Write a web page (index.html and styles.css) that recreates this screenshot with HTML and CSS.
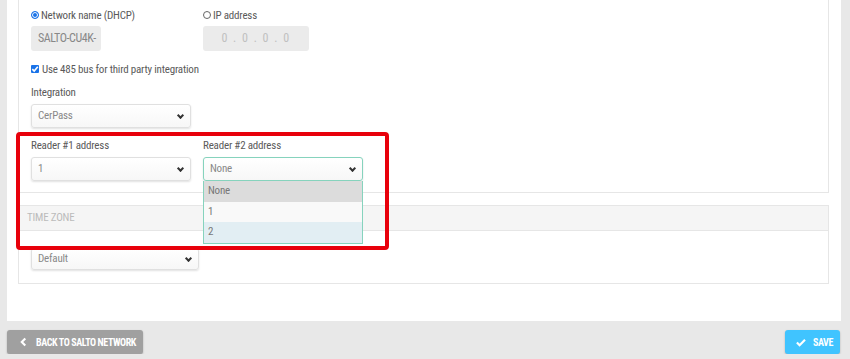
FILE: index.html
```html
<!DOCTYPE html>
<html lang="en">
<head>
    <meta charset="UTF-8">
    <title>SALTO CU4K</title>
    <link rel="stylesheet" href="styles.css">
</head>
<body>
    <div class="panel">
        <div class="card card-first">
            <div class="row">
                <div class="col">
                    <label class="opt"><span class="radio checked"></span>Network name (DHCP)</label>
                    <div class="readonly name-box">SALTO-CU4K-</div>
                </div>
                <div class="col">
                    <label class="opt"><span class="radio"></span>IP address</label>
                    <div class="readonly ip-box">0 . 0 . 0 . 0</div>
                </div>
            </div>

            <label class="opt check-row">
                <span class="checkbox">
                    <svg width="8" height="8" viewBox="0 0 8 8"><path d="M1.3 4.2 L3.2 6 L6.8 1.8" fill="none" stroke="#fff" stroke-width="1.6"/></svg>
                </span>Use 485 bus for third party integration
            </label>

            <div class="field-label">Integration</div>
            <div class="select">CerPass<span class="chev"></span></div>

            <div class="row reader-row">
                <div class="col">
                    <div class="field-label">Reader #1 address</div>
                    <div class="select">1<span class="chev"></span></div>
                </div>
                <div class="col dropdown-wrap">
                    <div class="field-label">Reader #2 address</div>
                    <div class="select focused">None<span class="chev"></span></div>
                    <ul class="dropdown">
                        <li class="selected">None</li>
                        <li>1</li>
                        <li class="hover">2</li>
                    </ul>
                </div>
            </div>
            <div class="highlight"></div>
        </div>

        <div class="card">
            <div class="card-header">TIME ZONE</div>
            <div class="card-body">
                <div class="select small">Default<span class="chev"></span></div>
            </div>
        </div>
    </div>

    <div class="footer">
        <button class="btn btn-back">
            <svg width="8" height="10" viewBox="0 0 8 10"><path d="M6 1 L2 5 L6 9" fill="none" stroke="#fff" stroke-width="2.4"/></svg>
            BACK TO SALTO NETWORK
        </button>
        <button class="btn btn-save">
            <svg width="11" height="9" viewBox="0 0 11 9"><path d="M1 4.5 L4 7.5 L10 1.5" fill="none" stroke="#fff" stroke-width="2.4"/></svg>
            SAVE
        </button>
    </div>
</body>
</html>
```

FILE: styles.css
```css
body {
    margin: 0;
    background-color: #e8e8e8;
    font-family: 'Liberation Sans Narrow', 'Roboto Condensed', 'DejaVu Sans Condensed', 'Liberation Sans', sans-serif;
    font-size: 11px;
    letter-spacing: -0.2px;
    color: #5a5a5a;
}

.panel {
    background-color: white;
    margin: 0 9px 0 7px;
    padding: 0 12px 37px 11px;
}

.card {
    border: 1px solid #e6e6e6;
    background-color: white;
    margin-top: 12px;
}

.card-first {
    position: relative;
    margin-top: 0;
    border-top: none;
    padding: 8px 12px 11px 12px;
}

.row {
    display: flex;
    gap: 12px;
}

.col {
    width: 160px;
    display: flex;
    flex-direction: column;
}

.opt {
    display: flex;
    align-items: center;
    height: 14px;
    white-space: nowrap;
}

.radio {
    width: 8px;
    height: 8px;
    border: 1px solid #666;
    border-radius: 50%;
    margin-right: 2px;
    background-color: white;
    box-sizing: border-box;
}

.radio.checked {
    border-color: #1a73e8;
    background-color: #1a73e8;
    box-shadow: inset 0 0 0 1px white;
}

.readonly {
    margin-top: 4px;
    height: 25px;
    line-height: 25px;
    border-radius: 3px;
    background-color: #ebebeb;
    color: #888;
}

.name-box {
    width: 63px;
    padding-left: 7px;
    font-size: 12px;
    letter-spacing: -0.4px;
}

.ip-box {
    width: 106px;
    text-align: center;
    color: #c0c0c0;
    letter-spacing: 1.5px;
    font-size: 12px;
}

.check-row {
    margin-top: 11px;
}

.checkbox {
    width: 8px;
    height: 8px;
    border-radius: 1px;
    background-color: #1a73e8;
    margin-right: 3px;
    display: flex;
}

.field-label {
    margin-top: 10px;
    height: 14px;
    line-height: 14px;
}

.row .field-label {
    margin-top: 0;
}

.select {
    position: relative;
    margin-top: 4px;
    width: 152px;
    height: 22px;
    line-height: 22px;
    padding-left: 6px;
    border: 1px solid #e0e0e0;
    border-radius: 3px;
    background: linear-gradient(#fff, #f7f7f7);
    box-shadow: 0 1px 2px rgba(0, 0, 0, 0.12);
    color: #888;
}

.chev {
    position: absolute;
    right: 7px;
    top: 8px;
    width: 3px;
    height: 3px;
    border-right: 2px solid #333;
    border-bottom: 2px solid #333;
    transform: rotate(45deg);
}

.select.focused {
    border-color: #86d3bd;
}

.reader-row {
    margin-top: 11px;
}

.dropdown-wrap {
    position: relative;
}

.dropdown {
    position: absolute;
    top: 42px;
    left: 0;
    width: 158px;
    margin: 0;
    padding: 0;
    list-style: none;
    border: 1px solid #86d3bd;
    border-top: none;
    z-index: 2;
}

.dropdown li {
    height: 20px;
    line-height: 20px;
    padding-left: 4px;
    background-color: #f9f9f9;
    color: #777;
}

.dropdown li.selected {
    height: 21px;
    background-color: #dcdcdc;
}

.dropdown li.hover {
    height: 21px;
    background-color: #e2eef3;
}

.highlight {
    position: absolute;
    left: -3px;
    top: 132px;
    width: 365px;
    height: 110px;
    border: 4px solid #e8000b;
    border-radius: 4px;
    z-index: 3;
}

.card-header {
    height: 24px;
    line-height: 24px;
    padding-left: 8px;
    background-color: #f5f5f5;
    border-bottom: 1px solid #e6e6e6;
    color: #bbb;
}

.card-body {
    padding: 17px 12px 13px 12px;
}

.select.small {
    margin-top: 0;
    width: 160px;
    height: 20px;
    line-height: 20px;
}

.select.small .chev {
    top: 7px;
}

.footer {
    display: flex;
    justify-content: space-between;
    padding: 9px 10px 0 7px;
}

.btn {
    display: flex;
    align-items: center;
    gap: 9px;
    height: 24px;
    border: none;
    border-radius: 3px;
    color: white;
    font-family: inherit;
    font-weight: bold;
    font-size: 10px;
    letter-spacing: -0.4px;
    white-space: nowrap;
    box-shadow: 0 1px 2px rgba(0, 0, 0, 0.25);
}

.btn-back {
    background-color: #a0a0a0;
    padding: 0 7px 0 13px;
    width: 136px;
}

.btn-save {
    background-color: #40c4ff;
    padding: 0 7px 0 11px;
    width: 55px;
    gap: 7px;
}
```
